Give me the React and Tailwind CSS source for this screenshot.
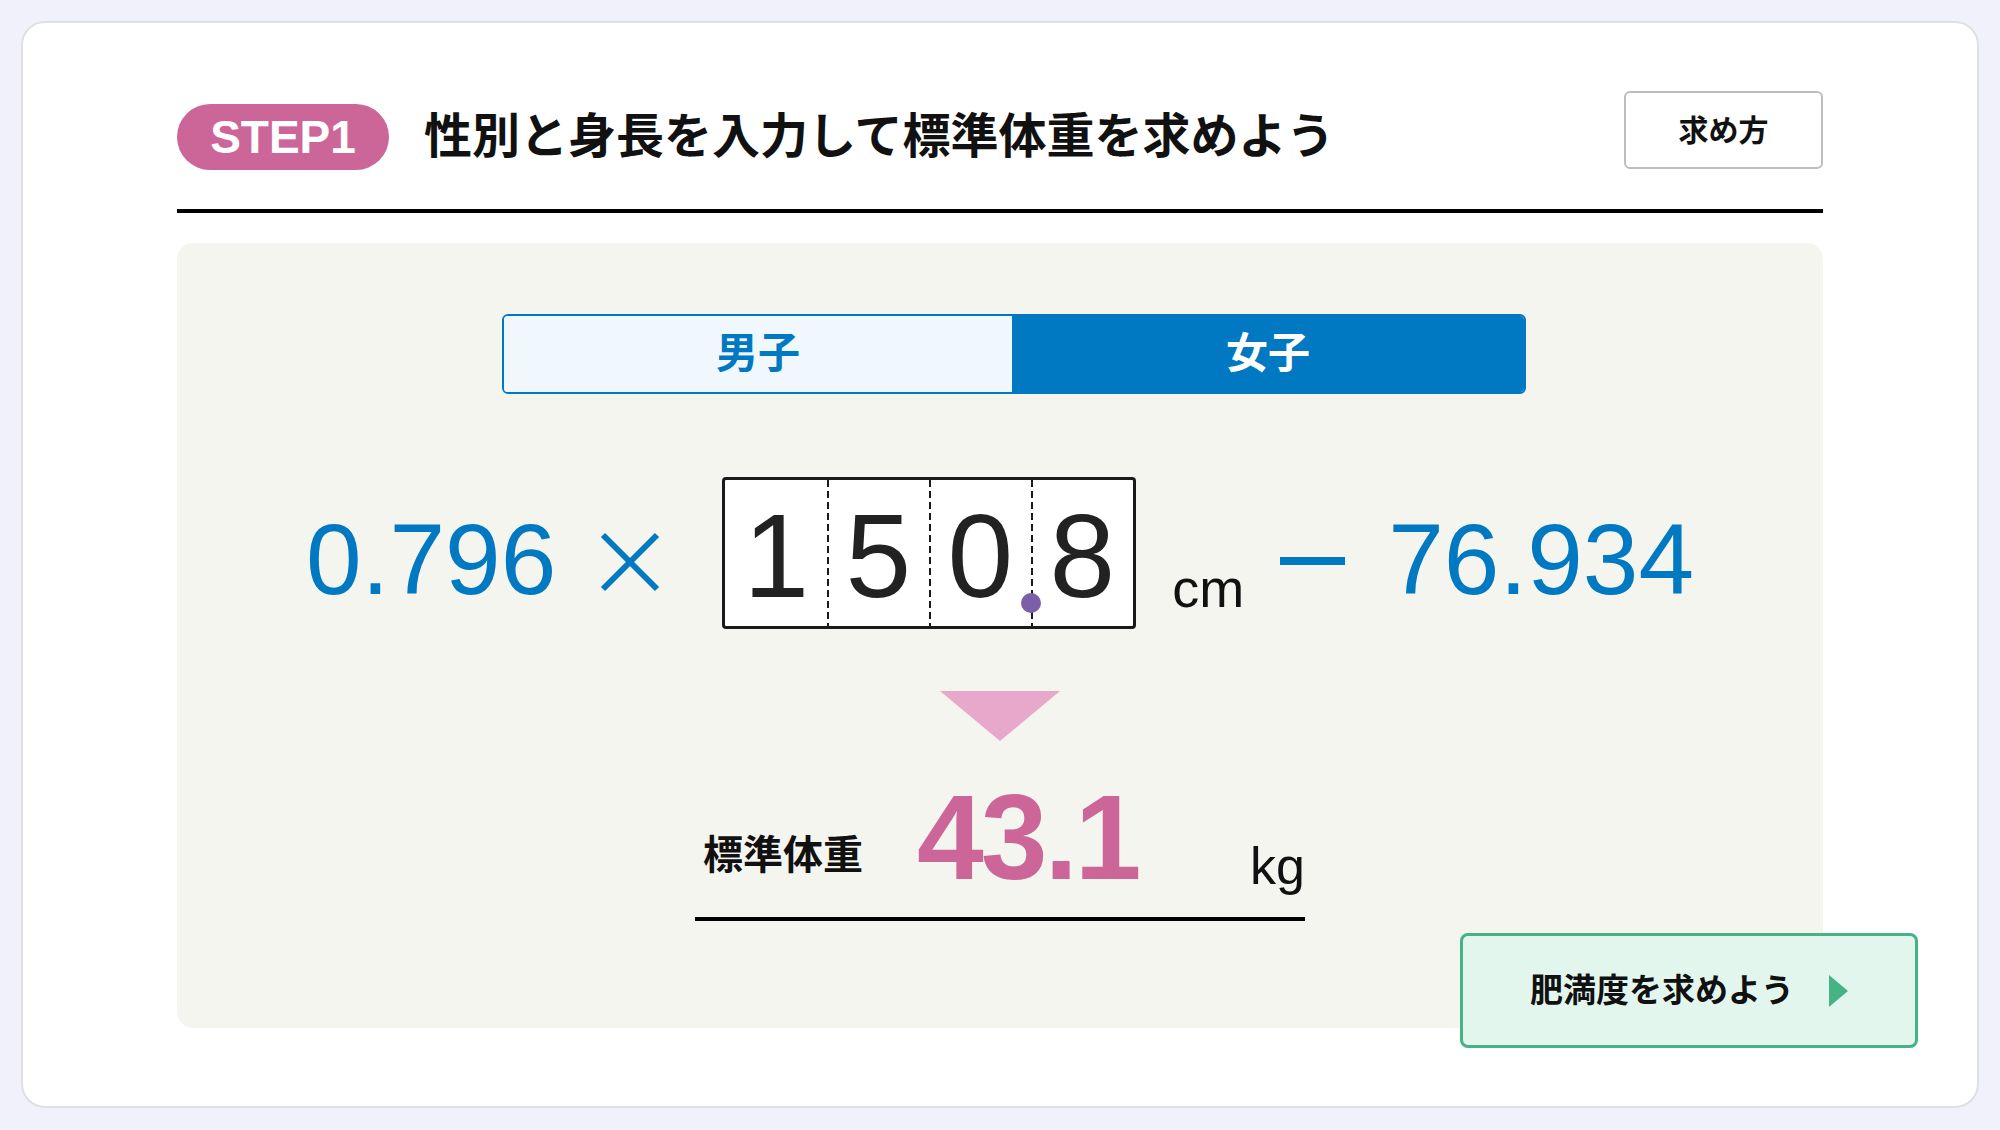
import React from 'react';

const digits = ['1', '5', '0', '8'];

export default function App() {
  return (
    <div className="min-h-screen bg-[#f0f1fa] p-[21px] font-['Liberation_Sans','Noto_Sans_CJK_JP',sans-serif]">
      <div className="relative h-[1087px] rounded-[24px] border-2 border-[#dfe0e6] bg-white px-[154px] pt-[68px]">
        {/* header */}
        <div className="flex items-end justify-between">
          <div className="flex items-center">
            <div className="flex h-[66px] w-[212px] items-center justify-center rounded-full bg-[#cc6699] text-[46px] font-bold leading-none text-white">
              STEP1
            </div>
            <h1 className="ml-[35px] text-[48px] font-bold leading-none text-[#111]">
              性別と身長を入力して標準体重を求めよう
            </h1>
          </div>
          <button className="mb-[1px] h-[78px] w-[199px] rounded-[6px] border-2 border-[#bdbdbd] bg-white text-[30px] font-bold text-[#111]">
            求め方
          </button>
        </div>
        <div className="mt-[39px] h-[4px] bg-black" />

        {/* panel */}
        <div className="mt-[30px] h-[785px] rounded-[16px] bg-[#f5f5f0] pt-[71px]">
          <div className="ml-[325px] flex h-[80px] w-[1024px] overflow-hidden rounded-[6px] border-2 border-[#0079c2]">
            <div className="flex w-[508px] items-center justify-center bg-[#f0f8fe] text-[42px] font-bold leading-none text-[#0079c2]">
              男子
            </div>
            <div className="flex flex-1 items-center justify-center bg-[#0079c2] text-[42px] font-bold leading-none text-white">
              女子
            </div>
          </div>

          <div className="mt-[83px] flex items-start pl-[129px]">
            <span className="mt-[32px] text-[100px] leading-none text-[#0079c2]">0.796</span>
            <svg className="ml-[44px] mt-[55px] h-[60px] w-[60px]" viewBox="0 0 60 60">
              <path d="M3 3 L57 57 M57 3 L3 57" stroke="#0079c2" strokeWidth="6" fill="none" />
            </svg>
            <div className="relative ml-[62px] grid h-[152px] w-[414px] grid-cols-4 rounded-[4px] border-[3px] border-[#1a1a1a] bg-white">
              {digits.map((d, i) => (
                <div
                  key={i}
                  className={
                    i > 0
                      ? 'flex items-center justify-center bg-[repeating-linear-gradient(to_bottom,#1a1a1a_0_7px,transparent_7px_11px)] bg-[length:2px_100%] bg-no-repeat pt-[6px] text-[118px] leading-none text-[#222]'
                      : 'flex items-center justify-center pt-[6px] text-[118px] leading-none text-[#222]'
                  }
                >
                  {d}
                </div>
              ))}
              <span className="absolute left-[296px] top-[113px] h-[20px] w-[20px] rounded-full bg-[#7b5fa8]" />
            </div>
            <span className="ml-[36px] mt-[84px] text-[54px] leading-none text-[#111]">cm</span>
            <div className="ml-[36px] mt-[80px] h-[8px] w-[65px] bg-[#0079c2]" />
            <span className="ml-[43px] mt-[32px] text-[100px] leading-none text-[#0079c2]">76.934</span>
          </div>

          <div className="mx-auto mt-[62px] h-0 w-0 border-x-[60px] border-t-[50px] border-x-transparent border-t-[#e8a8cb]" />

          <div className="mx-auto mt-[36px] w-[610px]">
            <div className="flex items-end pl-[8px]">
              <span className="mb-[22px] text-[40px] font-bold leading-none text-[#111]">標準体重</span>
              <span className="ml-[54px] text-[120px] font-bold leading-none tracking-[-3px] text-[#cc6699]">43.1</span>
              <span className="mb-[5px] ml-auto text-[52px] leading-none text-[#111]">kg</span>
            </div>
            <div className="mt-[20px] h-[4px] bg-black" />
          </div>
        </div>

        <button className="absolute bottom-[58px] right-[59px] flex h-[115px] w-[458px] items-center justify-center gap-[35px] rounded-[8px] border-[3px] border-[#46b386] bg-[#e2f6ee]">
          <span className="text-[33px] font-bold leading-none text-[#111]">肥満度を求めよう</span>
          <svg className="h-[32px] w-[19px]" viewBox="0 0 19 32">
            <polygon points="0,0 19,16 0,32" fill="#46b386" />
          </svg>
        </button>
      </div>
    </div>
  );
}
